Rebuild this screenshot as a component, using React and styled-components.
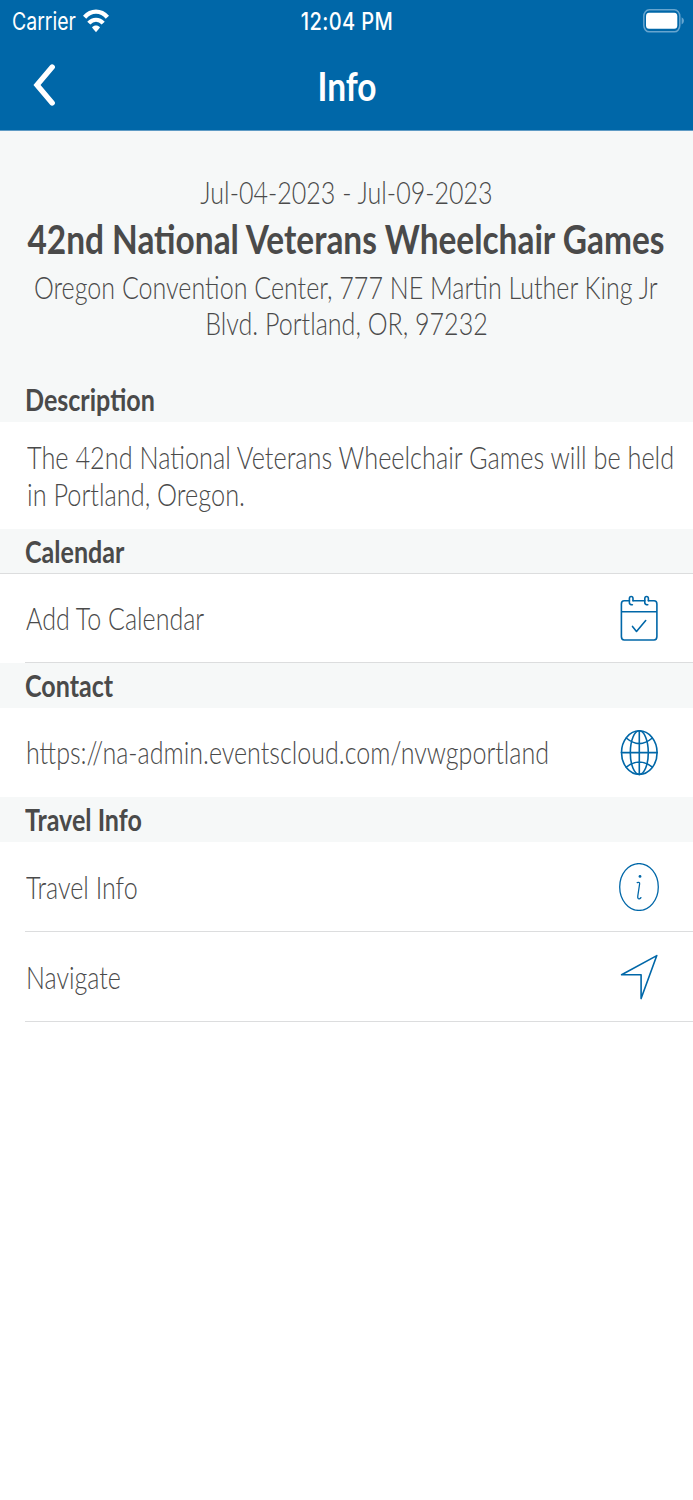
import React from 'react'
import styled, { createGlobalStyle, css } from 'styled-components'

const BLUE = '#0067a8'
const GREY = '#4a4a4a'
const PANEL = '#f6f8f8'
const LINE = '#dcddde'

const GlobalStyle = createGlobalStyle`
  body {
    margin: 0;
    background: #fff;
  }
`
const Screen = styled.div`
  min-height: 1500px;
  overflow: hidden;
  background: #fff;
  font-family: Lato, sans-serif;
  color: ${GREY};
`
const Header = styled.header`
  box-sizing: border-box;
  height: 131px;
  background: ${BLUE};
  border-bottom: 1px solid #5f9bc5;
  color: #fff;
`
// All type is condensed horizontally
const Text = styled.span`
  display: block;
  flex: none;
  white-space: nowrap;
  font-size: 30.6px;
  line-height: 36.7px;
  font-weight: ${props => (props.$bold ? 700 : 300)};
  transform: scaleX(${props => props.$condense || 0.819});
  transform-origin: ${props => (props.$center ? 'center' : 'left')};
`
const StatusBar = styled.div`
  display: grid;
  grid-template-columns: 1fr auto 1fr;
  align-items: center;
  height: 41px;
  padding: 0 9px 0 12px;
`
const StatusText = styled(Text)`
  font-family: Inter, sans-serif;
  font-size: 24.2px;
  line-height: 30px;
  font-weight: 400;
  padding-top: 3px;
`
const Time = styled(StatusText)`
  padding-right: 3px;
  font-weight: 500;
  letter-spacing: 0.45px;
`
const Carrier = styled.div`
  display: flex;
  align-items: center;
`
const CarrierName = styled.div`
  width: 71px;
`
const Battery = styled.svg`
  justify-self: end;
`
const NavBar = styled.div`
  display: grid;
  grid-template-columns: 90px 1fr 90px;
  align-items: center;
  height: 89px;
`
const BackButton = styled.button`
  display: flex;
  align-items: center;
  height: 89px;
  padding: 0 0 1px 32px;
  border: 0;
  background: none;
`
const NavTitle = styled.h1`
  display: flex;
  justify-content: center;
  margin: 0;
`
const Large = styled(Text)`
  font-size: 40.8px;
  line-height: 49px;
  font-weight: 700;
`
const Hero = styled.section`
  box-sizing: border-box;
  display: flex;
  flex-direction: column;
  align-items: center;
  height: 246px;
  padding: 44px 1px 0 0;
  background: ${PANEL};
`
const EventName = styled.h2`
  display: flex;
  justify-content: center;
  margin: 2px 0 7px;
`
const SectionTitle = styled.h3`
  box-sizing: border-box;
  display: flex;
  align-items: center;
  height: 45px;
  margin: 0;
  padding: 2px 25.4px 0;
  background: ${PANEL};
  ${props =>
    props.$line &&
    css`
      border-bottom: 1px solid ${LINE};
    `}
`
const Description = styled.div`
  box-sizing: border-box;
  height: 107px;
  padding: 18px 0 0 27px;
`
const Row = styled.div`
  box-sizing: border-box;
  display: flex;
  align-items: center;
  justify-content: space-between;
  height: ${props => props.$height || 90}px;
  margin-left: 25px;
  padding: 0 34px 0 0.5px;
  border-bottom: 1px solid ${props => (props.$line ? LINE : 'transparent')};
`
const RowText = styled(Text)`
  width: 400px;
  padding-top: 3px;
`
const Icon = styled.svg`
  flex: none;
  width: 40px;
  height: 48px;
  fill: none;
  stroke: ${BLUE};
  stroke-width: 1.6;
  stroke-linecap: round;
  stroke-linejoin: round;
`

const BackIcon = () => (
  <svg width="24" height="42" viewBox="0 0 24 42" fill="none" stroke="#fff">
    <path d="M20.2 3L5 21L20.2 39" strokeWidth="5.4" strokeLinecap="round" />
  </svg>
)

const WifiIcon = () => (
  <svg width="26" height="24" viewBox="0 0 26 24" fill="none" stroke="#fff">
    <path d="M1.6 8.2C8 .8 18 .8 24.4 8.2" strokeWidth="4.4" />
    <path d="M5.8 14.2C10 9.6 16 9.6 20.2 14.2" strokeWidth="4.2" />
    <path d="M9 18.4C11.2 16 14.8 16 17 18.4L13 23.3Z" fill="#fff" stroke="none" />
  </svg>
)

const BatteryIcon = () => (
  <Battery width="41" height="24" viewBox="0 0 41 24">
    <rect x="0.8" y="0.8" width="36" height="22" rx="5.5" ry="6.5" fill="none" stroke="#67a5cf" strokeWidth="1.5" />
    <rect x="3" y="3.7" width="31.3" height="16" rx="3" ry="3.5" fill="#fff" />
    <path d="M38.6 8.2Q41 9.6 41 11.8T38.6 15.4Z" fill="#67a5cf" />
  </Battery>
)

const CalendarIcon = () => (
  <Icon viewBox="0 0 40 48">
    <path d="M10.4 6.8H5.2Q2.4 6.8 2.4 10V42.6Q2.4 46 5.2 46H35Q37.9 46 37.9 42.6V10Q37.9 6.8 35 6.8H29.4M14 6.8H25.8M2.4 17.7H37.9" />
    <path d="M14 6.8V4.6Q14 2.5 12.2 2.5T10.4 4.6V8.8Q10.4 10.8 13.4 10.8" />
    <path d="M29.4 6.8V4.6Q29.4 2.5 27.6 2.5T25.8 4.6V8.8Q25.8 10.8 28.8 10.8" />
    <path d="M13.5 32.4L17.5 37.4L26.7 26.5" />
  </Icon>
)

const GlobeIcon = () => (
  <Icon viewBox="0 0 40 48">
    <ellipse cx="20.3" cy="24.6" rx="17.8" ry="21.8" />
    <ellipse cx="20.3" cy="24.6" rx="9" ry="21.8" />
    <path d="M20.3 2.8V46.4M2.5 24.6H38.1M7.3 10Q20.3 21.2 33.3 10M7.3 39.2Q20.3 28.8 33.3 39.2" />
  </Icon>
)

const InfoIcon = () => (
  <Icon viewBox="0 0 40 48">
    <ellipse cx="20" cy="24" rx="19.3" ry="23.4" strokeWidth="1.3" />
    <circle cx="21" cy="13.4" r="1.4" fill={BLUE} stroke="none" />
    <path d="M18.2 19.6Q21 18.6 20.6 21L18.8 33Q18.4 36 20.3 35.8Q21.4 35.6 21.9 34.6" strokeWidth="1.3" />
  </Icon>
)

const NavigateIcon = () => (
  <Icon viewBox="0 0 40 48">
    <path d="M37.8 2.6L2.6 21.8H22.1V45.6Z" />
  </Icon>
)

const App = () => (
  <Screen>
    <GlobalStyle />
    <Header>
      <StatusBar>
        <Carrier>
          <CarrierName>
            <StatusText $condense={0.806}>Carrier</StatusText>
          </CarrierName>
          <WifiIcon />
        </Carrier>
        <Time $center $condense={0.828}>
          12:04 PM
        </Time>
        <BatteryIcon />
      </StatusBar>
      <NavBar>
        <BackButton aria-label="Back">
          <BackIcon />
        </BackButton>
        <NavTitle>
          <Large $center>Info</Large>
        </NavTitle>
      </NavBar>
    </Header>
    <Hero>
      <Text $center>Jul-04-2023 - Jul-09-2023</Text>
      <EventName>
        <Large $center>42nd National Veterans Wheelchair Games</Large>
      </EventName>
      <Text $center>Oregon Convention Center, 777 NE Martin Luther King Jr</Text>
      <Text $center>Blvd. Portland, OR, 97232</Text>
    </Hero>
    <SectionTitle>
      <Text $bold>Description</Text>
    </SectionTitle>
    <Description>
      <Text $condense={0.827}>The 42nd National Veterans Wheelchair Games will be held</Text>
      <Text $condense={0.827}>in Portland, Oregon.</Text>
    </Description>
    <SectionTitle $line>
      <Text $bold>Calendar</Text>
    </SectionTitle>
    <Row $height={89} $line>
      <RowText>Add To Calendar</RowText>
      <CalendarIcon />
    </Row>
    <SectionTitle>
      <Text $bold>Contact</Text>
    </SectionTitle>
    <Row $height={89}>
      <RowText>https://na-admin.eventscloud.com/nvwgportland</RowText>
      <GlobeIcon />
    </Row>
    <SectionTitle>
      <Text $bold>Travel Info</Text>
    </SectionTitle>
    <Row $line>
      <RowText>Travel Info</RowText>
      <InfoIcon />
    </Row>
    <Row $line>
      <RowText>Navigate</RowText>
      <NavigateIcon />
    </Row>
  </Screen>
)

export default App
